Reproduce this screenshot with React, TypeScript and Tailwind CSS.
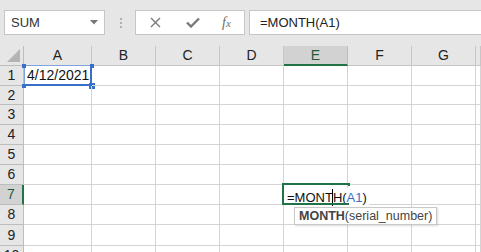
import React from 'react';

const cols = ['A', 'B', 'C', 'D', 'E', 'F', 'G', ''];
const rowHeights = [20, 19, 20, 20, 20, 20, 20, 20, 21, 20];

function Corner() {
  return (
    <div className="relative h-full border-r border-b border-[#bdbdbd] bg-[#e6e6e6]">
      <svg className="absolute bottom-[3px] right-[3px]" width="13" height="13" viewBox="0 0 13 13">
        <polygon points="13,0 13,13 0,13" fill="#b4b4b4" />
      </svg>
    </div>
  );
}

function Toolbar() {
  return (
    <div className="flex h-[46px] items-start bg-[#e6e6e6] pt-[10px]">
      <div className="ml-[4px] flex h-[25px] w-[101px] items-center justify-between border border-[#c6c6c6] bg-white pl-[6px] pr-[6px] text-[13px] text-[#333]">
        <span>SUM</span>
        <svg width="8" height="5" viewBox="0 0 8 5">
          <polygon points="0,0 8,0 4,4.5" fill="#777" />
        </svg>
      </div>
      <div className="ml-[15px] mt-[8px] flex flex-col gap-[2px]">
        <span className="h-[2px] w-[2px] bg-[#b0b0b0]" />
        <span className="h-[2px] w-[2px] bg-[#b0b0b0]" />
        <span className="h-[2px] w-[2px] bg-[#b0b0b0]" />
      </div>
      <div className="ml-[13px] flex h-[25px] w-[110px] items-center border border-[#c6c6c6] bg-white">
        <svg className="ml-[14px]" width="11" height="11" viewBox="0 0 11 11">
          <path d="M1 1L10 10M10 1L1 10" stroke="#7a7a7a" strokeWidth="1.4" />
        </svg>
        <svg className="ml-[25px]" width="14" height="11" viewBox="0 0 14 11">
          <path d="M1 5.5L5 9.5L13 1.5" stroke="#7a7a7a" strokeWidth="2.4" fill="none" />
        </svg>
        <span className="ml-[22px] font-['Liberation_Serif',serif] text-[14px] italic text-[#6e6e6e]">
          f<span className="text-[11px]">x</span>
        </span>
      </div>
      <div className="ml-[4px] flex h-[25px] flex-1 items-center border border-r-0 border-[#c6c6c6] bg-white pl-[10px] text-[13px] text-[#222]">
        =MONTH(A1)
      </div>
    </div>
  );
}

export default function App() {
  return (
    <div className="h-[252px] w-[481px] overflow-hidden bg-white font-['Liberation_Sans',Arial,sans-serif]">
      <Toolbar />
      <div className="grid grid-cols-[24px_68px_64px_64px_64px_64px_64px_64px_1fr]">
        <div className="h-[20px]">
          <Corner />
        </div>
        {cols.map((c, i) => (
          <div
            key={i}
            className={`flex h-[20px] items-center justify-center text-[14px] ${
              c === 'E'
                ? 'border-r border-b-2 border-r-[#bdbdbd] border-b-[#217346] bg-[#d2d2d2] text-[#1d5a36]'
                : 'border-r border-b border-[#c6c6c6] bg-[#e6e6e6] text-[#222]'
            }`}
          >
            {c}
          </div>
        ))}

        {rowHeights.map((h, r) => {
          const row = r + 1;
          return (
            <React.Fragment key={row}>
              <div
                style={{ height: h }}
                className={`flex items-center justify-center text-[14px] ${
                  row === 7
                    ? 'border-r-2 border-b border-r-[#217346] border-b-[#bdbdbd] bg-[#d2d2d2] text-[#1d5a36]'
                    : 'border-r border-b border-[#bdbdbd] bg-[#e6e6e6] text-[#222]'
                }`}
              >
                {row}
              </div>
              {cols.map((c, ci) => {
                const isA1 = row === 1 && c === 'A';
                const isE7 = row === 7 && c === 'E';
                return (
                  <div
                    key={ci}
                    style={{ height: h }}
                    className={`relative border-r border-b border-[#d4d4d4] ${isE7 ? 'z-10' : ''}`}
                  >
                    {isA1 && (
                      <>
                        <div className="absolute left-[0px] top-[-1px] h-[21px] w-[68px] border border-b-2 border-r-2 border-[#3a6fc9] border-t-[#7fa3e0] border-l-[#7fa3e0]" />
                        <span className="absolute left-[-2px] top-[-2px] h-[4px] w-[4px] bg-[#3a6fc9]" />
                        <span className="absolute right-[-3px] top-[-2px] h-[4px] w-[4px] bg-[#3a6fc9]" />
                        <span className="absolute bottom-[-3px] left-[-2px] h-[4px] w-[4px] bg-[#3a6fc9]" />
                        <span className="absolute bottom-[-4px] right-[-4px] h-[6px] w-[6px] bg-[#3a6fc9]" />
                        <div className="relative pl-[3px] text-[14px] leading-[19px] text-[#111]">4/12/2021</div>
                      </>
                    )}
                    {isE7 && (
                      <>
                        <div className="relative inline-block whitespace-nowrap bg-white pl-[3px] pr-[2px] text-[13px] leading-[19px] text-[#111]">
                          =MONT
                          <span className="relative inline-block w-0">
                            <span className="absolute left-[-0.5px] top-[-13px] h-[17px] w-[1px] bg-black" />
                          </span>
                          H(<span className="text-[#3b6fc4]">A1</span>)
                        </div>
                        <div className="absolute left-[-2px] top-[-2px] h-[22px] w-[67px] border-2 border-r-0 border-[#217346]" />
                        <span className="absolute right-[-3px] top-[-2px] h-[3px] w-[2px] bg-[#217346]" />
                        <div className="absolute left-[10px] top-[22px] whitespace-nowrap border border-[#c8c8c8] bg-white px-[4px] text-[12.5px] leading-[16px] text-[#444] shadow-[1px_1px_2px_rgba(0,0,0,0.15)]">
                          <span className="font-bold">MONTH</span>(serial_number)
                        </div>
                      </>
                    )}
                  </div>
                );
              })}
            </React.Fragment>
          );
        })}
      </div>
    </div>
  );
}
